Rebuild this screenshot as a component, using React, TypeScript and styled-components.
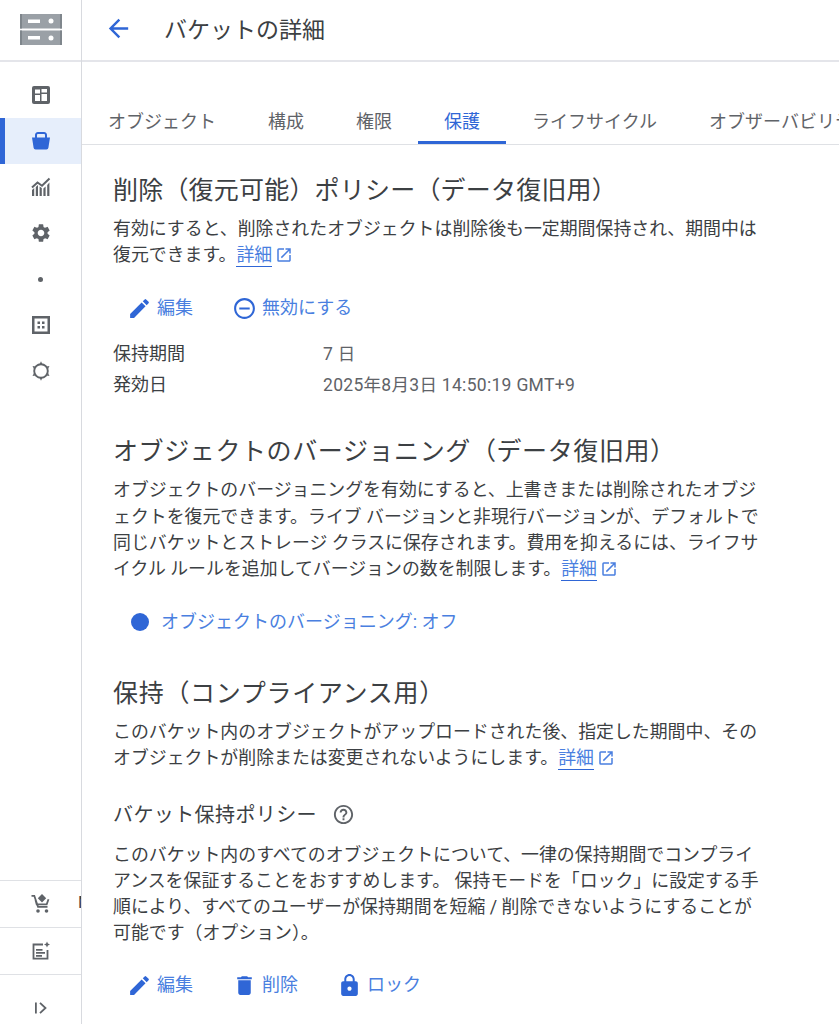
import React from 'react'
import styled, { createGlobalStyle } from 'styled-components'
import {
  MdArrowBack,
  MdDelete,
  MdEdit,
  MdHelpOutline,
  MdLock,
  MdOpenInNew,
  MdRemoveCircleOutline,
  MdSettings,
} from 'react-icons/md'

const GlobalStyle = createGlobalStyle`
  html, body {
    margin: 0;
    height: 100%;
    overflow: hidden;
    background: #fff;
  }
  body {
    font-family: Roboto, "Noto Sans CJK JP", sans-serif;
    color: #3c4043;
  }
`

const BLUE = '#2f66d6'
const LINK = '#4a7fe0'
const GREY = '#5f6368'

const DashIcon = () => (
  <svg width="18" height="18" viewBox="0 0 18 18">
    <rect width="18" height="18" rx="2" fill={GREY} />
    <path fill="#fff" d="M3 3.500h5v4H3zM3 9h5v6H3zM9.500 3h5.500v3.500H9.500zM9.500 8H15v7H9.500z" />
  </svg>
)
const BucketIcon = () => (
  <svg width="20" height="20" viewBox="0 0 20 20">
    <path fill={BLUE} d="M1 6.500h18l-1.600 10.200a2 2 0 0 1-2 1.800H4.600a2 2 0 0 1-2-1.800z" />
    <path fill="none" stroke={BLUE} strokeWidth="2" d="M5 7V4.200A2 2 0 0 1 7 2h6a2 2 0 0 1 2 2.200V7" />
  </svg>
)
const ChartIcon = () => (
  <svg width="20" height="20" viewBox="0 0 20 20">
    <path fill={GREY} d="M1 13l2.200-2v8H1zM4.800 10l2.200-2v11H4.800zM8.600 9.500l2.200 1.500v8H8.600zM12.400 11.500l2.200-2v9.500h-2.200zM16.200 8l2.200-2.500V19h-2.200z" />
    <path fill="none" stroke={GREY} strokeWidth="2" d="M1 10.500l5.500-5 4.500 3.200L18.500 1.500" />
  </svg>
)
const GridIcon = () => (
  <svg width="18" height="18" viewBox="0 0 18 18">
    <path fill={GREY} fillRule="evenodd" d="M0 0h18v18H0zM2.500 2.500v13h13v-13z" />
    <path fill={GREY} d="M5.500 5.500H8V8H5.500zM10 5.500h2.500V8H10zM5.500 10H8v2.500H5.500zM10 10h2.500v2.500H10z" />
  </svg>
)
const HexIcon = () => (
  <svg width="20" height="20" viewBox="0 0 20 20">
    <circle cx="10" cy="10" r="6.800" fill="none" stroke={GREY} strokeWidth="1.900" />
    <path fill={GREY} d="M10 0.300l1.300 2.700H8.700zM10 19.700l1.300-2.700H8.700zM1.500 5.100l3 .3-1.600 2.300zM18.500 5.100l-3 .3 1.600 2.300zM1.500 14.900l3-.3-1.600-2.300zM18.500 14.900l-3-.3 1.600-2.300z" />
  </svg>
)
const CartIcon = () => (
  <svg width="20" height="20" viewBox="0 0 20 20">
    <path fill="none" stroke={GREY} strokeWidth="1.800" d="M0.500 1.800h2.800l3.700 11h9.500M4.500 6l1.200 4.300h10l1.800-5" />
    <circle cx="7" cy="17" r="1.800" fill={GREY} />
    <circle cx="15.500" cy="17" r="1.800" fill={GREY} />
    <path fill={GREY} d="M11 0l4.200 4.200L11 8.400 6.800 4.200z" />
  </svg>
)
const NoteIcon = () => (
  <svg width="20" height="20" viewBox="0 0 20 20">
    <path fill="none" stroke={GREY} strokeWidth="1.800" d="M12 3.500H2.500v14.200h14V9" />
    <path fill={GREY} d="M5 8h6.500v1.700H5zM5 11h9v1.700H5zM5 14h6v1.700H5z" />
    <path fill={GREY} d="M16 0.500l.9 2.100 2.100.9-2.100.9-.9 2.100-.9-2.100-2.100-.9 2.100-.9z" />
  </svg>
)
const CollapseIcon = () => (
  <svg width="16" height="16" viewBox="0 0 16 16">
    <path fill={GREY} d="M2 2.500h1.800v11H2z" />
    <path fill="none" stroke={GREY} strokeWidth="1.800" d="M7 2.800L12.500 8 7 13.200" />
  </svg>
)
const LogoIcon = () => (
  <svg width="42" height="31" viewBox="0 0 42 31">
    <path fill="#9aa0a6" d="M0 0h42v14.500H0zM0 16.500h42V31H0z" />
    <path fill="#7f868c" d="M0 0h2v14.500H0zM40 0h2v14.500h-2zM0 16.500h2V31H0zM40 16.500h2V31h-2z" />
    <path fill="#fff" d="M8 5.500h12V9H8zM8 22h12v3.500H8z" />
    <circle cx="31" cy="7" r="2.500" fill="#fff" />
    <circle cx="31" cy="24" r="2.500" fill="#fff" />
  </svg>
)

const Page = styled.div`
  display: flex;
  width: 839px;
  height: 1024px;
  overflow: hidden;
`

const Sidebar = styled.aside`
  flex: none;
  width: 81px;
  height: 1040px;
  display: flex;
  flex-direction: column;
  border-right: 1px solid #d8dadf;
`

const LogoBox = styled.div`
  height: 62px;
  flex: none;
  display: flex;
  align-items: flex-start;
  justify-content: center;
  padding-top: 14px;
  box-sizing: border-box;
  border-bottom: 2px solid #e4e5ea;
`

const NavList = styled.nav`
  flex: 1;
  padding-top: 10px;
  display: flex;
  flex-direction: column;
`

const NavItem = styled.div<{ $active?: boolean }>`
  height: 46px;
  display: flex;
  align-items: center;
  justify-content: center;
  background: ${p => (p.$active ? '#e6eefb' : 'transparent')};
  box-shadow: ${p => (p.$active ? `inset 5px 0 0 ${BLUE}` : 'none')};
`

const Dot = styled.span`
  width: 5px;
  height: 5px;
  border-radius: 50%;
  background: ${GREY};
`

const FootItem = styled.div<{ $tall?: boolean }>`
  position: relative;
  height: ${p => (p.$tall ? 66 : 47)}px;
  flex: none;
  display: flex;
  align-items: center;
  justify-content: center;
  box-sizing: border-box;
  border-top: 1px solid #dfe1e5;
  overflow: hidden;
`

const ClippedLabel = styled.span`
  position: absolute;
  left: 78px;
  top: 11px;
  font-size: 17px;
  color: #3c4043;
`

const Main = styled.main`
  flex: 1;
  min-width: 0;
  display: flex;
  flex-direction: column;
`

const Header = styled.header`
  height: 62px;
  flex: none;
  box-sizing: border-box;
  display: flex;
  align-items: center;
  padding: 0 0 4px 22px;
  border-bottom: 2px solid #e4e5ea;
`

const BackButton = styled.span`
  display: flex;
  color: ${BLUE};
  font-size: 29px;
`

const HeaderTitle = styled.h1`
  margin: 0 0 0 31px;
  font-size: 23px;
  font-weight: 400;
  color: #3c4043;
`

const Tabs = styled.div`
  margin-top: 36px;
  flex: none;
  height: 46px;
  display: flex;
  white-space: nowrap;
  border-bottom: 1px solid #dfe1e5;
`

const Tab = styled.div<{ $active?: boolean }>`
  flex: none;
  height: 46px;
  box-sizing: border-box;
  padding: 0 26px;
  display: flex;
  align-items: center;
  font-size: 18px;
  color: ${p => (p.$active ? BLUE : GREY)};
  border-bottom: ${p => (p.$active ? `3px solid ${BLUE}` : '3px solid transparent')};
`

const Content = styled.div`
  padding: 28px 0 0 31px;
  width: 650px;
`

const SectionTitle = styled.h2<{ $top?: number; $spacing: number }>`
  margin: ${p => p.$top ?? 0}px -40px 0 0;
  font-size: 25px;
  line-height: 36px;
  font-weight: 400;
  letter-spacing: ${p => p.$spacing}px;
  color: #3c4043;
  white-space: nowrap;
`

const SubTitle = styled.h3`
  margin: 28px 0 0;
  display: flex;
  align-items: center;
  gap: 15px;
  font-size: 20px;
  line-height: 30px;
  font-weight: 400;
  letter-spacing: 0.4px;
  color: #3c4043;
`

const HelpMark = styled.span`
  display: flex;
  color: ${GREY};
  font-size: 23px;
`

const Body = styled.p<{ $top?: number }>`
  margin: ${p => p.$top ?? 7}px 0 0;
  font-size: 17.9px;
  line-height: 26.2px;
  color: #3c4043;
`

const Link = styled.a`
  color: ${LINK};
  border-bottom: 1px solid ${BLUE};
  padding-bottom: 1px;
`

const ExternalIcon = styled.span`
  display: inline-block;
  margin-left: 3px;
  color: ${LINK};
  font-size: 18px;
  line-height: 0;
  vertical-align: -3px;
`

const Actions = styled.div<{ $top: number }>`
  display: flex;
  margin-top: ${p => p.$top}px;
  padding-left: 14px;
  gap: 39px;
`

const ActionButton = styled.span`
  display: flex;
  align-items: center;
  gap: 5px;
  font-size: 18px;
  line-height: 26px;
  color: ${LINK};
  white-space: nowrap;
`

const ActionIcon = styled.span`
  display: flex;
  color: ${BLUE};
  font-size: 25px;
`

const InfoGrid = styled.dl<{ $top?: number }>`
  display: grid;
  grid-template-columns: 210px 1fr;
  row-gap: 5px;
  margin: ${p => p.$top ?? 20}px 0 0;
  font-size: 18px;
  line-height: 26px;
`

const InfoLabel = styled.dt`
  color: #3c4043;
`

const InfoValue = styled.dd`
  margin: 0;
  font-size: 17.5px;
  letter-spacing: 0.3px;
  color: ${GREY};
  white-space: nowrap;
`

const StatusRow = styled.div`
  display: flex;
  align-items: center;
  gap: 12px;
  margin-top: 27px;
  padding-left: 18px;
  font-size: 18px;
  line-height: 26px;
  color: ${LINK};
`

const StatusDot = styled.span`
  width: 18px;
  height: 18px;
  border-radius: 50%;
  background: ${BLUE};
`

const Detail = () => (
  <>
    <Link>詳細</Link>
    <ExternalIcon><MdOpenInNew /></ExternalIcon>
  </>
)

const Action = ({ icon, label }: { icon: React.ReactNode; label: string }) => (
  <ActionButton>
    <ActionIcon>{icon}</ActionIcon>
    {label}
  </ActionButton>
)

export default function App() {
  return (
    <>
      <GlobalStyle />
      <Page>
        <Sidebar>
          <LogoBox><LogoIcon /></LogoBox>
          <NavList>
            <NavItem><DashIcon /></NavItem>
            <NavItem $active><BucketIcon /></NavItem>
            <NavItem><ChartIcon /></NavItem>
            <NavItem><MdSettings size={22} color={GREY} /></NavItem>
            <NavItem><Dot /></NavItem>
            <NavItem><GridIcon /></NavItem>
            <NavItem><HexIcon /></NavItem>
          </NavList>
          <FootItem><CartIcon /><ClippedLabel>M</ClippedLabel></FootItem>
          <FootItem><NoteIcon /></FootItem>
          <FootItem $tall><CollapseIcon /></FootItem>
        </Sidebar>
        <Main>
          <Header>
            <BackButton><MdArrowBack /></BackButton>
            <HeaderTitle>バケットの詳細</HeaderTitle>
          </Header>
          <Tabs>
            <Tab>オブジェクト</Tab>
            <Tab>構成</Tab>
            <Tab>権限</Tab>
            <Tab $active>保護</Tab>
            <Tab>ライフサイクル</Tab>
            <Tab>オブザーバビリティ</Tab>
          </Tabs>
          <Content>
            <SectionTitle $spacing={0.2}>削除（復元可能）ポリシー（データ復旧用）</SectionTitle>
            <Body>
              有効にすると、削除されたオブジェクトは削除後も一定期間保持され、期間中は復元できます。<Detail />
            </Body>
            <Actions $top={27}>
              <Action icon={<MdEdit />} label="編集" />
              <Action icon={<MdRemoveCircleOutline />} label="無効にする" />
            </Actions>
            <InfoGrid>
              <InfoLabel>保持期間</InfoLabel>
              <InfoValue>7 日</InfoValue>
              <InfoLabel>発効日</InfoLabel>
              <InfoValue>2025年8月3日 14:50:19 GMT+9</InfoValue>
            </InfoGrid>
            <SectionTitle $top={36} $spacing={0.6}>オブジェクトのバージョニング（データ復旧用）</SectionTitle>
            <Body>
              オブジェクトのバージョニングを有効にすると、上書きまたは削除されたオブジェクトを復元できます。ライブ バージョンと非現行バージョンが、デフォルトで同じバケットとストレージ クラスに保存されます。費用を抑えるには、ライフサイクル ルールを追加してバージョンの数を制限します。<Detail />
            </Body>
            <StatusRow>
              <StatusDot />
              オブジェクトのバージョニング: オフ
            </StatusRow>
            <SectionTitle $top={41} $spacing={0.7}>保持（コンプライアンス用）</SectionTitle>
            <Body $top={7}>
              このバケット内のオブジェクトがアップロードされた後、指定した期間中、そのオブジェクトが削除または変更されないようにします。<Detail />
            </Body>
            <SubTitle>
              バケット保持ポリシー
              <HelpMark><MdHelpOutline /></HelpMark>
            </SubTitle>
            <Body $top={12}>
              このバケット内のすべてのオブジェクトについて、一律の保持期間でコンプライアンスを保証することをおすすめします。 保持モードを「ロック」に設定する手順により、すべてのユーザーが保持期間を短縮 / 削除できないようにすることが可能です（オプション）。
            </Body>
            <Actions $top={26}>
              <Action icon={<MdEdit />} label="編集" />
              <Action icon={<MdDelete />} label="削除" />
              <Action icon={<MdLock />} label="ロック" />
            </Actions>
            <InfoGrid $top={23}>
              <InfoLabel>種類</InfoLabel>
            </InfoGrid>
          </Content>
        </Main>
      </Page>
    </>
  )
}
